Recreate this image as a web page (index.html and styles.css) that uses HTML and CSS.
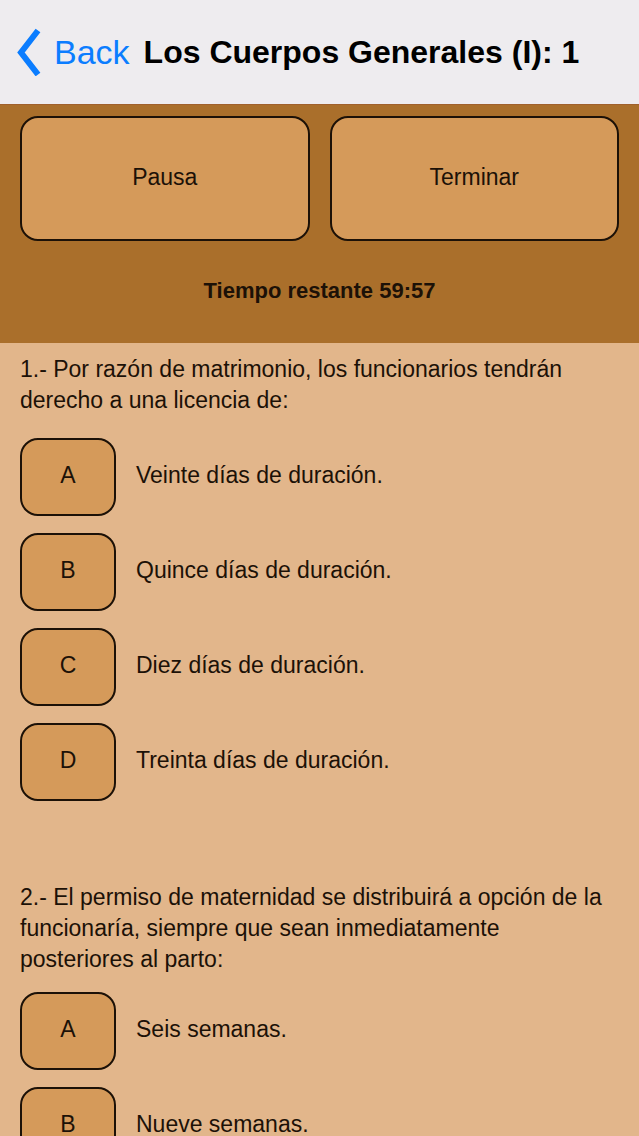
FILE: index.html
```html
<!DOCTYPE html>
<html lang="es">
<head>
    <meta charset="UTF-8">
    <meta name="viewport" content="width=device-width, initial-scale=1.0">
    <title>Los Cuerpos Generales (I): 1</title>
    <link rel="stylesheet" href="styles.css">
</head>
<body>
    <header class="navbar">
        <a class="back" href="#">
            <svg class="chevron" viewBox="0 0 26 48" aria-hidden="true"><path d="M22 2.5 L5 24.5 L22 46.5" /></svg>
            <span>Back</span>
        </a>
        <h1>Los Cuerpos Generales (I): 1</h1>
    </header>

    <section class="controls">
        <div class="buttons">
            <button type="button">Pausa</button>
            <button type="button">Terminar</button>
        </div>
        <p class="timer">Tiempo restante 59:57</p>
    </section>

    <main>
        <section class="question">
            <h2>1.- Por razón de matrimonio, los funcionarios tendrán derecho a una licencia de:</h2>
            <div class="answer"><button type="button" aria-labelledby="q1a">A</button><span id="q1a">Veinte días de duración.</span></div>
            <div class="answer"><button type="button" aria-labelledby="q1b">B</button><span id="q1b">Quince días de duración.</span></div>
            <div class="answer"><button type="button" aria-labelledby="q1c">C</button><span id="q1c">Diez días de duración.</span></div>
            <div class="answer"><button type="button" aria-labelledby="q1d">D</button><span id="q1d">Treinta días de duración.</span></div>
        </section>
        <section class="question">
            <h2>2.- El permiso de maternidad se distribuirá a opción de la funcionaría, siempre que sean inmediatamente posteriores al parto:</h2>
            <div class="answer"><button type="button" aria-labelledby="q2a">A</button><span id="q2a">Seis semanas.</span></div>
            <div class="answer"><button type="button" aria-labelledby="q2b">B</button><span id="q2b">Nueve semanas.</span></div>
        </section>
    </main>
</body>
</html>
```

FILE: styles.css
```css
* { box-sizing: border-box; }
html, body { height: 100%; }
body {
    margin: 0; display: flex; flex-direction: column; overflow: hidden;
    font-family: "Liberation Sans", Arial, sans-serif; font-size: 23px; line-height: 31px;
    color: #1c1107; background: #e2b68b;
}
h1, h2, p { margin: 0; }
button {
    font: inherit; color: inherit; padding: 0 0 2px; cursor: pointer;
    background: #d59a5a; border: 2px solid #1c1107; border-radius: 18px;
}

.navbar {
    display: flex; align-items: center; flex-shrink: 0; gap: 14px;
    height: 104px; padding: 0 16px; background: #eeecef;
}
.back {
    display: flex; align-items: center; gap: 12px;
    color: #0b7dff; font-size: 34px; text-decoration: none;
}
.chevron { width: 26px; height: 48px; fill: none; stroke: #0b7dff; stroke-width: 6; }
.navbar h1 { font-size: 32px; line-height: 40px; color: #000; white-space: nowrap; }

.controls {
    flex-shrink: 0; padding: 11px 20px 37px; background: #aa6f2b;
    border-top: 1px solid #a0602c;
}
.buttons { display: flex; gap: 20px; }
.buttons button { flex: 1; height: 125px; }
.timer { margin-top: 34px; font-size: 22px; font-weight: bold; text-align: center; }

main { flex: 1; min-height: 0; overflow: hidden; padding: 11px 20px 0; }
.question { margin-bottom: 81px; }
.question h2 { min-height: 84px; padding-bottom: 17px; font-size: inherit; font-weight: normal; }
.answer { display: flex; align-items: center; gap: 20px; margin-bottom: 17px; }
.answer button { width: 96px; height: 78px; flex-shrink: 0; padding-bottom: 4px; }
.answer span { padding-bottom: 4px; }
```
